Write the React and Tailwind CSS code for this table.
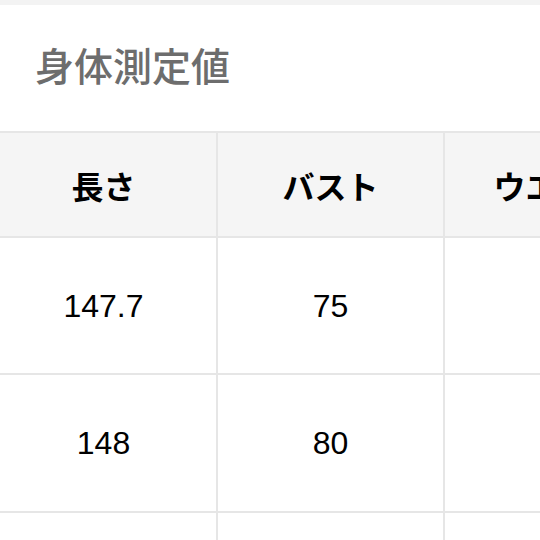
const columns = ["長さ", "バスト", "ウエスト"];

const rows = [
  ["147.7", "75", "62"],
  ["148", "80", "64"],
  ["150", "82", "66"],
];

export default function App() {
  return (
    <div className="w-[540px] h-[540px] overflow-hidden bg-white">
      <div className="h-[5px] bg-[#f3f3f3]" />
      <div className="h-[126px] pt-[40px] pl-[35px]">
        <h2
          className="text-[39px] leading-none font-medium text-[#6d6d6d]"
          style={{ fontFamily: '"Noto Sans CJK JP", sans-serif' }}
        >
          身体測定値
        </h2>
      </div>
      <div className="ml-[-9px] w-[681px] border-t-2 border-[#e6e6e6]">
        <div className="flex h-[105px] bg-[#f5f5f5] border-b-2 border-[#e6e6e6]">
          {columns.map((c) => (
            <div
              key={c}
              className="w-[227px] shrink-0 border-r-2 border-[#e6e6e6] flex items-center justify-center text-[32px] font-bold text-black"
              style={{ fontFamily: '"Noto Sans CJK JP", sans-serif' }}
            >
              {c}
            </div>
          ))}
        </div>
        {rows.map((r, i) => (
          <div
            key={i}
            className={`flex border-b-2 border-[#e6e6e6] ${i === 0 ? "h-[137px]" : "h-[138px]"}`}
          >
            {r.map((v, j) => (
              <div
                key={j}
                className="w-[227px] shrink-0 border-r-2 border-[#e6e6e6] flex items-center justify-center text-[32px] text-black"
                style={{ fontFamily: '"Liberation Sans", Arial, sans-serif' }}
              >
                {v}
              </div>
            ))}
          </div>
        ))}
      </div>
    </div>
  );
}
